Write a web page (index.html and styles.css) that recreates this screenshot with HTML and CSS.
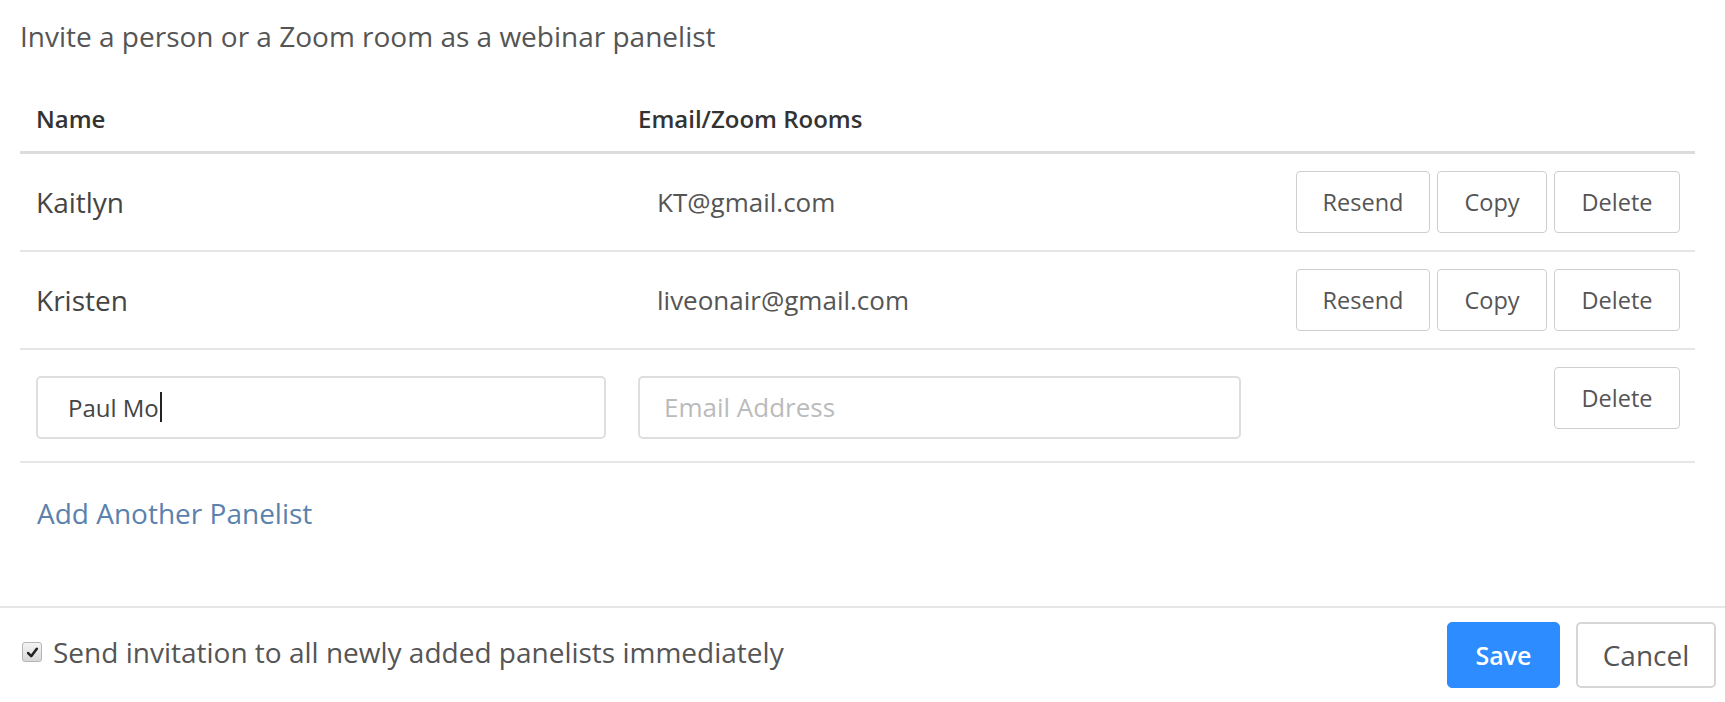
FILE: index.html
```html
<!DOCTYPE html>
<html lang="en">
<head>
<meta charset="utf-8">
<title>Webinar Panelists</title>
<link rel="stylesheet" href="styles.css">
</head>
<body>
<div class="page">
  <main class="main">
    <h1 class="title">Invite a person or a Zoom room as a webinar panelist</h1>
    <div class="table">
      <div class="row head">
        <div class="col-name">Name</div>
        <div class="col-email">Email/Zoom Rooms</div>
        <div class="col-actions"></div>
      </div>
      <div class="row">
        <div class="col-name cell-text">Kaitlyn</div>
        <div class="col-email cell-text email">KT@gmail.com</div>
        <div class="col-actions">
          <button class="btn btn-resend">Resend</button>
          <button class="btn btn-copy">Copy</button>
          <button class="btn btn-delete">Delete</button>
        </div>
      </div>
      <div class="row">
        <div class="col-name cell-text">Kristen</div>
        <div class="col-email cell-text email">liveonair@gmail.com</div>
        <div class="col-actions">
          <button class="btn btn-resend">Resend</button>
          <button class="btn btn-copy">Copy</button>
          <button class="btn btn-delete">Delete</button>
        </div>
      </div>
      <div class="row row-edit">
        <div class="col-name"><div class="input input-name">Paul Mo<span class="caret"></span></div></div>
        <div class="col-email"><div class="input input-email placeholder">Email Address</div></div>
        <div class="col-actions actions-top">
          <button class="btn btn-delete">Delete</button>
        </div>
      </div>
    </div>
    <a class="add-link" href="#">Add Another Panelist</a>
  </main>
  <footer class="footer">
    <label class="check">
      <span class="checkbox"><svg viewBox="0 0 12 12" width="13" height="13"><path d="M2 6.5 L4.8 9.4 L10 2.6" fill="none" stroke="#222" stroke-width="2.4" stroke-linecap="round" stroke-linejoin="round"/></svg></span>
      <span class="check-label">Send invitation to all newly added panelists immediately</span>
    </label>
    <div class="footer-actions">
      <button class="btn-save">Save</button>
      <button class="btn-cancel">Cancel</button>
    </div>
  </footer>
</div>
</body>
</html>
```

FILE: styles.css
```css
* { box-sizing: border-box; }
html, body { margin: 0; padding: 0; background: #fff; }
body {
  font-family: "Open Sans", "Noto Sans", sans-serif;
  color: #444;
}
.page {
  min-height: 100vh;
  display: flex;
  flex-direction: column;
}
.main {
  flex: 1;
  padding: 17px 30px 0 20px;
}
.title {
  margin: 0;
  font-size: 28px;
  font-weight: 400;
  line-height: 38px;
  color: #555;
}
.table {
  margin-top: 30px;
}
.row {
  display: flex;
  align-items: center;
  height: 98px;
  border-bottom: 2px solid #e6e6e6;
}
.row.head {
  height: 69px;
  align-items: flex-start;
  padding-top: 19px;
  line-height: 30px;
  border-bottom: 3px solid #dcdcdc;
  font-weight: 600;
  font-size: 24px;
  color: #333;
}
.row-edit { height: 113px; }
.col-name { width: 618px; padding-left: 16px; flex: none; }
.col-email { width: 620px; flex: none; }
.col-actions {
  flex: 1;
  display: flex;
  justify-content: flex-end;
  gap: 7px;
  padding-right: 15px;
}
.actions-top { align-self: flex-start; margin-top: 17px; }
.cell-text { font-size: 28px; color: #444; }
.email { padding-left: 19px; font-size: 26px; color: #555; }
.btn {
  height: 62px;
  background: #fff;
  border: 1px solid #cfcfcf;
  border-radius: 4px;
  font-family: inherit;
  font-size: 23.5px;
  color: #555;
  padding: 0;
}
.btn-resend { width: 134px; }
.btn-copy { width: 110px; }
.btn-delete { width: 126px; }
.input {
  height: 63px;
  margin-top: 3px;
  border: 2px solid #dedede;
  border-radius: 5px;
  display: flex;
  align-items: center;
  padding-left: 30px;
  font-size: 24px;
  color: #444;
}
.input-name { width: 570px; }
.input-email { width: 603px; padding-left: 24px; font-size: 26px; }
.placeholder { color: #bbb; }
.caret {
  display: inline-block;
  width: 2px;
  height: 30px;
  background: #222;
  margin-left: 1px;
}
.add-link {
  display: block;
  margin-top: 31px;
  margin-left: 17px;
  font-size: 28px;
  line-height: 38px;
  color: #5a82ad;
  text-decoration: none;
}
.footer {
  height: 96px;
  border-top: 2px solid #e6e6e6;
  display: flex;
  align-items: center;
  justify-content: space-between;
  padding: 0 9px 0 22px;
}
.check {
  display: flex;
  align-items: center;
  gap: 11px;
  margin-top: -6px;
}
.checkbox {
  width: 20px;
  height: 20px;
  border: 1px solid #b5b5b5;
  border-radius: 3px;
  background: linear-gradient(#f4f4f4, #d8d8d8);
  display: flex;
  align-items: center;
  justify-content: center;
}
.check-label { font-size: 28px; color: #555; }
.footer-actions { display: flex; gap: 16px; }
.btn-save, .btn-cancel {
  height: 66px;
  border-radius: 5px;
  font-family: inherit;
  padding: 0;
}
.btn-save {
  width: 113px;
  background: #2d8cff;
  border: 1px solid #2d8cff;
  color: #fff;
  font-size: 25px;
  font-weight: 600;
}
.btn-cancel {
  width: 140px;
  background: #fff;
  border: 2px solid #d6d6d6;
  color: #555;
  font-size: 28px;
}
```
